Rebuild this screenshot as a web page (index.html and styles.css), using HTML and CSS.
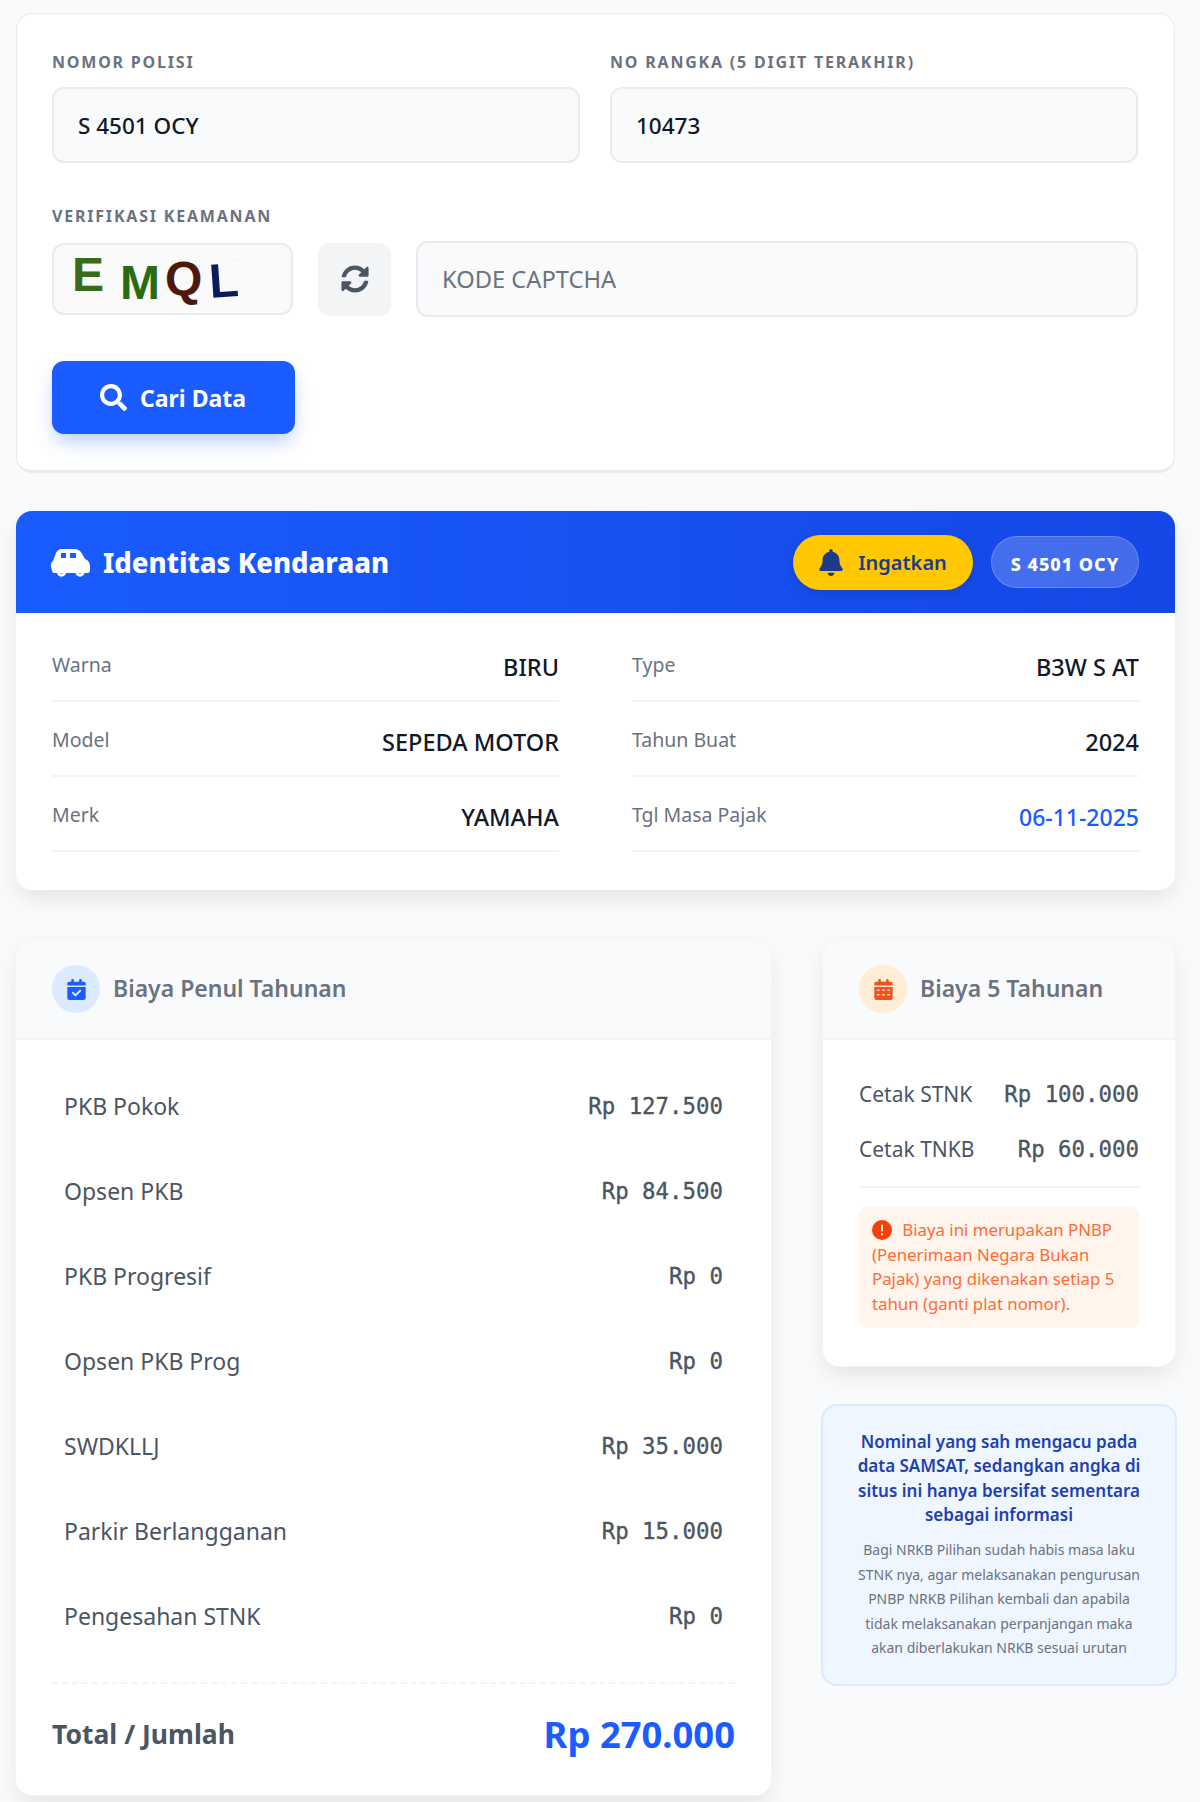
FILE: index.html
```html
<!DOCTYPE html>
<html lang="en">
<head>
    <meta charset="UTF-8">
    <meta name="viewport" content="width=device-width, initial-scale=1.0">
    <title>Cek Pajak Kendaraan</title>
    <link rel="stylesheet" href="styles.css">
</head>
<body>
    <div class="container">
        <form class="card search-card">
            <div class="form-row">
                <div class="field">
                    <label for="nopol">Nomor Polisi</label>
                    <input type="text" id="nopol" value="S 4501 OCY">
                </div>
                <div class="field">
                    <label for="rangka">No Rangka (5 Digit Terakhir)</label>
                    <input type="text" id="rangka" value="10473">
                </div>
            </div>
            <label for="captcha">Verifikasi Keamanan</label>
            <div class="captcha-row">
                <div class="captcha-img">
                    <svg class="captcha-noise" viewBox="0 0 240 72"><path d="M50 6 L150 70 M90 60 L205 8 M10 20 L60 50" /></svg>
                    <span class="ch ch-e">E</span><span class="ch ch-m">M</span><span class="ch ch-q">Q</span><span class="ch ch-l">L</span>
                </div>
                <button type="button" class="refresh-btn">
                    <svg viewBox="0 0 512 512"><path d="M370.72 133.28C339.458 104.008 298.888 87.962 255.848 88c-77.458.068-144.328 53.178-162.791 126.85-1.344 5.363-6.122 9.15-11.651 9.15H24.103c-7.498 0-13.194-6.807-11.807-14.176C33.933 94.924 134.813 8 256 8c66.448 0 126.791 26.136 171.315 68.685L463.03 40.97C478.149 25.851 504 36.559 504 57.941V192c0 13.255-10.745 24-24 24H345.941c-21.382 0-32.09-25.851-16.971-40.971l41.75-41.749zM32 296h134.059c21.382 0 32.09 25.851 16.971 40.971l-41.75 41.75c31.262 29.273 71.835 45.319 114.876 45.28 77.418-.07 144.315-53.144 162.787-126.849 1.344-5.363 6.122-9.15 11.651-9.15h57.304c7.498 0 13.194 6.807 11.807 14.176C478.067 417.076 377.187 504 256 504c-66.448 0-126.791-26.136-171.315-68.685L48.97 471.03C33.851 486.149 8 475.441 8 454.059V320c0-13.255 10.745-24 24-24z"/></svg>
                </button>
                <input type="text" id="captcha" placeholder="KODE CAPTCHA">
            </div>
            <button type="submit" class="search-btn">
                <svg viewBox="0 0 512 512"><path d="M505 442.7L405.3 343c-4.5-4.5-10.6-7-17-7H372c27.6-35.3 44-79.7 44-128C416 93.1 322.9 0 208 0S0 93.1 0 208s93.1 208 208 208c48.3 0 92.7-16.4 128-44v16.3c0 6.4 2.5 12.5 7 17l99.7 99.7c9.4 9.4 24.6 9.4 33.9 0l28.3-28.3c9.4-9.4 9.4-24.6.1-34zM208 336c-70.7 0-128-57.2-128-128 0-70.7 57.2-128 128-128 70.7 0 128 57.2 128 128 0 70.7-57.2 128-128 128z"/></svg>
                Cari Data
            </button>
        </form>

        <section class="card vehicle-card">
            <div class="vehicle-head">
                <h2>
                    <svg viewBox="0 0 39 27">
                        <path fill-rule="evenodd" d="M1 21C-1 16 0 13 2 12L5 4C6 2 8 0 11 0H23C26 0 28 1 30 3L34 10C37 11 39 14 39 17V21C39 23 38 24 36 24H3C2 24 1 23 1 21ZM10 4V9H15V4ZM19 4V9H25V4Z"/>
                        <circle cx="10.5" cy="23" r="3.2"/>
                        <circle cx="29" cy="23" r="3.2"/>
                    </svg>
                    Identitas Kendaraan
                </h2>
                <div class="head-actions">
                    <button type="button" class="remind-btn">
                        <svg viewBox="0 0 448 512"><path d="M224 0c-17.7 0-32 14.3-32 32V51.2C119 66 64 130.6 64 208v18.8c0 47-17.3 92.4-48.5 127.6l-7.4 8.3c-8.4 9.4-10.4 22.9-5.3 34.4S19.4 416 32 416H416c12.6 0 24-7.4 29.2-18.9s3.1-25-5.3-34.4l-7.4-8.3C401.3 319.2 384 273.9 384 226.8V208c0-77.4-55-142-128-156.8V32c0-17.7-14.3-32-32-32zm45.3 493.3c12-12 18.7-28.3 18.7-45.3H224 160c0 17 6.7 33.3 18.7 45.3s28.3 18.7 45.3 18.7s33.3-6.7 45.3-18.7z"/></svg>
                        Ingatkan
                    </button>
                    <span class="plate">S 4501 OCY</span>
                </div>
            </div>
            <div class="vehicle-body">
                <div class="info-row"><span>Warna</span><strong>BIRU</strong></div>
                <div class="info-row"><span>Type</span><strong>B3W S AT</strong></div>
                <div class="info-row"><span>Model</span><strong>SEPEDA MOTOR</strong></div>
                <div class="info-row"><span>Tahun Buat</span><strong>2024</strong></div>
                <div class="info-row"><span>Merk</span><strong>YAMAHA</strong></div>
                <div class="info-row"><span>Tgl Masa Pajak</span><strong class="date">06-11-2025</strong></div>
            </div>
        </section>

        <div class="cost-grid">
            <section class="card cost-card">
                <div class="cost-head">
                    <span class="head-icon blue">
                        <svg viewBox="0 0 448 512"><path d="M128 0c17.7 0 32 14.3 32 32V64H288V32c0-17.7 14.3-32 32-32s32 14.3 32 32V64h48c26.5 0 48 21.5 48 48v48H0V112C0 85.5 21.5 64 48 64H96V32c0-17.7 14.3-32 32-32zM0 192H448V464c0 26.5-21.5 48-48 48H48c-26.5 0-48-21.5-48-48V192zM329 305c9.4-9.4 9.4-24.6 0-33.9s-24.6-9.4-33.9 0l-95 95-47-47c-9.4-9.4-24.6-9.4-33.9 0s-9.4 24.6 0 33.9l64 64c9.4 9.4 24.6 9.4 33.9 0L329 305z"/></svg>
                    </span>
                    <h3>Biaya Penul Tahunan</h3>
                </div>
                <div class="cost-body">
                    <div class="cost-list">
                        <div class="cost-row"><span>PKB Pokok</span><code>Rp 127.500</code></div>
                        <div class="cost-row"><span>Opsen PKB</span><code>Rp 84.500</code></div>
                        <div class="cost-row"><span>PKB Progresif</span><code>Rp 0</code></div>
                        <div class="cost-row"><span>Opsen PKB Prog</span><code>Rp 0</code></div>
                        <div class="cost-row"><span>SWDKLLJ</span><code>Rp 35.000</code></div>
                        <div class="cost-row"><span>Parkir Berlangganan</span><code>Rp 15.000</code></div>
                        <div class="cost-row"><span>Pengesahan STNK</span><code>Rp 0</code></div>
                    </div>
                    <div class="total-row"><span>Total / Jumlah</span><strong>Rp 270.000</strong></div>
                </div>
            </section>

            <div class="side-col">
                <section class="card cost-card">
                    <div class="cost-head">
                        <span class="head-icon orange">
                            <svg viewBox="0 0 448 512"><path fill-rule="evenodd" d="M128 0c17.7 0 32 14.3 32 32V64H288V32c0-17.7 14.3-32 32-32s32 14.3 32 32V64h48c26.5 0 48 21.5 48 48v48H0V112C0 85.5 21.5 64 48 64H96V32c0-17.7 14.3-32 32-32zM0 192H448V464c0 26.5-21.5 48-48 48H48c-26.5 0-48-21.5-48-48V192zM64 256v32h64v-32zm128 0v32h64v-32zm128 0v32h64v-32zM64 368v32h64v-32zm128 0v32h64v-32zm128 0v32h64v-32z"/></svg>
                        </span>
                        <h3>Biaya 5 Tahunan</h3>
                    </div>
                    <div class="side-body">
                        <div class="side-list">
                            <div class="side-row"><span>Cetak STNK</span><code>Rp 100.000</code></div>
                            <div class="side-row"><span>Cetak TNKB</span><code>Rp 60.000</code></div>
                        </div>
                        <p class="pnbp-note">
                            <svg viewBox="0 0 512 512"><path fill-rule="evenodd" d="M256 0a256 256 0 1 1 0 512A256 256 0 1 1 256 0zM232 120v170h48V120zm0 220v48h48v-48z"/></svg>
                            Biaya ini merupakan PNBP (Penerimaan Negara Bukan Pajak) yang dikenakan setiap 5 tahun (ganti plat nomor).
                        </p>
                    </div>
                </section>

                <section class="info-box">
                    <h4>Nominal yang sah mengacu pada data SAMSAT, sedangkan angka di situs ini hanya bersifat sementara sebagai informasi</h4>
                    <p>Bagi NRKB Pilihan sudah habis masa laku STNK nya, agar melaksanakan pengurusan PNBP NRKB Pilihan kembali dan apabila tidak melaksanakan perpanjangan maka akan diberlakukan NRKB sesuai urutan</p>
                </section>
            </div>
        </div>
    </div>
</body>
</html>
```

FILE: styles.css
```css
* {
    box-sizing: border-box;
}
body {
    margin: 0;
    background-color: #f8fafc;
    font-family: "Noto Sans", sans-serif;
    color: #111827;
}
.container {
    padding: 13px 25px 7px 16px;
}
.card {
    background-color: #fff;
    border-radius: 16px;
    overflow: hidden;
    box-shadow: 0 10px 25px -3px rgba(0, 0, 0, 0.1);
}

/* search form */
.search-card {
    padding: 37px 36px 38px 35px;
    border: 1px solid #e9ebef;
    border-bottom-width: 3px;
    height: 460px;
    box-shadow: none;
}
label {
    display: block;
    font-size: 16px;
    line-height: 22px;
    font-weight: 700;
    color: #6b7280;
    letter-spacing: 1.8px;
    text-transform: uppercase;
    margin-bottom: 14px;
}
.form-row {
    display: grid;
    grid-template-columns: 1fr 1fr;
    gap: 30px;
    margin-bottom: 42px;
}
input[type="text"] {
    width: 100%;
    height: 76px;
    padding: 0 24px;
    background-color: #f9fafb;
    border: 2px solid #e9ebef;
    border-radius: 12px;
    font-family: inherit;
    font-size: 22.5px;
    font-weight: 500;
    color: #111827;
}
input::placeholder {
    color: #6b7280;
    font-size: 23.7px;
    font-weight: 400;
}
.captcha-row {
    display: flex;
    align-items: center;
    gap: 25px;
    margin-bottom: 44px;
}
.captcha-row input[type="text"] {
    flex: 1;
}
.captcha-img {
    position: relative;
    width: 241px;
    height: 72px;
    padding-left: 18px;
    background-color: #fafafa;
    border: 2px solid #e9ebef;
    border-radius: 12px;
    display: flex;
    align-items: center;
    flex-shrink: 0;
    font-family: "Liberation Sans", sans-serif;
    font-weight: 700;
}
.captcha-noise {
    position: absolute;
    inset: 0;
    width: 100%;
    height: 100%;
}
.captcha-noise path {
    stroke: #f2f2f2;
    fill: none;
}
.ch {
    position: relative;
    display: inline-block;
    font-size: 48px;
    line-height: 1;
}
.ch-e { color: #3a6a1c; transform: translateY(-4px); margin-right: 16px; }
.ch-m { color: #2a6a10; transform: translateY(4px); margin-right: 5px; }
.ch-q { color: #4e190c; transform: translateY(0); margin-right: 7px; }
.ch-l { color: #0b1a5e; transform: translateY(2px) rotate(-4deg); }
.refresh-btn {
    width: 73px;
    height: 73px;
    flex-shrink: 0;
    border: none;
    border-radius: 12px;
    background-color: #f3f4f6;
    display: flex;
    align-items: center;
    justify-content: center;
}
.refresh-btn svg {
    width: 28px;
    height: 28px;
    fill: #4b5563;
}
.search-btn {
    width: 243px;
    height: 73px;
    padding-left: 5px;
    border: none;
    border-radius: 12px;
    background-color: #1a5cff;
    color: #fff;
    font-family: inherit;
    font-size: 23px;
    font-weight: 700;
    display: flex;
    align-items: center;
    justify-content: center;
    gap: 13px;
    box-shadow: 0 10px 20px -4px rgba(26, 92, 255, 0.35);
}
.search-btn svg {
    width: 27px;
    height: 27px;
    fill: #fff;
}

/* vehicle */
.vehicle-card {
    margin-top: 38px;
    height: 379px;
}
.vehicle-head {
    height: 102px;
    padding: 0 36px;
    display: flex;
    align-items: center;
    justify-content: space-between;
    background: linear-gradient(90deg, #1a5cff, #1447e6);
}
.vehicle-head h2 {
    margin: 0;
    display: flex;
    align-items: center;
    gap: 13px;
    font-size: 27.5px;
    font-weight: 800;
    color: #fff;
}
.vehicle-head h2 svg {
    width: 39px;
    height: 27px;
    margin-left: -1px;
    fill: #fff;
    overflow: visible;
}
.vehicle-head h2 circle {
    fill: none;
    stroke: #fff;
    stroke-width: 3;
}
.head-actions {
    display: flex;
    align-items: center;
    gap: 18px;
}
.remind-btn {
    width: 180px;
    height: 55px;
    border: none;
    border-radius: 28px;
    background-color: #ffc800;
    color: #1e3a8a;
    font-family: inherit;
    font-size: 20px;
    font-weight: 600;
    display: flex;
    align-items: center;
    justify-content: center;
    gap: 15px;
    box-shadow: 0 4px 12px rgba(0, 0, 0, 0.12);
}
.remind-btn svg {
    width: 24px;
    height: 27px;
    fill: #1e3a8a;
}
.plate {
    width: 148px;
    height: 52px;
    padding-top: 3px;
    border-radius: 26px;
    border: 1px solid rgba(255, 255, 255, 0.2);
    background-color: rgba(255, 255, 255, 0.2);
    color: #fff;
    font-size: 18px;
    font-weight: 800;
    letter-spacing: 1px;
    display: flex;
    align-items: center;
    justify-content: center;
}
.vehicle-body {
    padding: 14px 36px 0;
    display: grid;
    grid-template-columns: 507px 507px;
    column-gap: 73px;
}
.info-row {
    height: 75px;
    padding-top: 26px;
    border-bottom: 2px solid #f3f4f6;
    display: flex;
    justify-content: space-between;
}
.info-row span {
    font-size: 19.5px;
    line-height: 24px;
    color: #6b7280;
}
.info-row strong {
    font-size: 23.5px;
    line-height: 28px;
    font-weight: 500;
    color: #111827;
}
.info-row .date {
    font-size: 23px;
    color: #1a5cff;
}

/* costs */
.cost-grid {
    margin-top: 50px;
    display: grid;
    grid-template-columns: 755px 352px;
    gap: 52px;
    align-items: start;
}
.cost-card {
    box-shadow: 0 0 0 1px #f3f4f6, 0 10px 25px -3px rgba(0, 0, 0, 0.1);
}
.cost-head {
    height: 100px;
    padding: 0 36px;
    display: flex;
    align-items: center;
    gap: 13px;
    background-color: #f9fafb;
    border-bottom: 2px solid #f3f4f6;
}
.cost-head h3 {
    margin: 0;
    padding-bottom: 3px;
    font-size: 23px;
    font-weight: 600;
    color: #6b7280;
}
.head-icon {
    width: 48px;
    height: 48px;
    border-radius: 50%;
    display: flex;
    align-items: center;
    justify-content: center;
}
.head-icon svg {
    width: 19px;
    height: 21px;
}
.head-icon.blue {
    background-color: #dbeafe;
}
.head-icon.blue svg {
    fill: #1a5cff;
}
.head-icon.orange {
    background-color: #ffedd5;
}
.head-icon.orange svg {
    fill: #f4511e;
}
.cost-body {
    padding: 23px 36px 12px;
}
.cost-list {
    padding: 0 12px 24px;
    border-bottom: 2px dashed #f3f4f6;
}
.cost-row {
    height: 85px;
    display: flex;
    align-items: center;
    justify-content: space-between;
}
.cost-row span {
    font-size: 23px;
    color: #4b5563;
}
code {
    font-family: "DejaVu Sans Mono", monospace;
    font-size: 22.4px;
    color: #4b5563;
    -webkit-text-stroke: 0.35px #4b5563;
}
.total-row {
    height: 99px;
    display: flex;
    align-items: center;
    justify-content: space-between;
}
.total-row span {
    font-size: 26.5px;
    font-weight: 700;
    color: #4b5563;
}
.total-row strong {
    font-size: 36.4px;
    font-weight: 700;
    color: #1a5cff;
}
.side-col {
    display: flex;
    flex-direction: column;
    gap: 38px;
}
.side-body {
    padding: 26px 36px 38px;
}
.side-list {
    padding-bottom: 10px;
    margin-bottom: 19px;
    border-bottom: 2px solid #f3f4f6;
}
.side-row {
    height: 55px;
    display: flex;
    align-items: center;
    justify-content: space-between;
}
.side-row span {
    font-size: 21px;
    color: #4b5563;
}
.pnbp-note {
    margin: 0;
    padding: 11px 13px 12px;
    background-color: #fff5ed;
    border-radius: 8px;
    font-size: 16.8px;
    line-height: 24.5px;
    color: #ff6b35;
}
.pnbp-note svg {
    width: 20px;
    height: 20px;
    margin-right: 6px;
    vertical-align: -4px;
    fill: #f4410b;
}
.info-box {
    margin: 0 -2px;
    padding: 24px 24px;
    height: 282px;
    background-color: #eff6ff;
    border: 2px solid #dbeafe;
    border-radius: 16px;
    text-align: center;
}
.info-box h4 {
    margin: 0 0 11px;
    font-size: 17px;
    line-height: 24.3px;
    font-weight: 600;
    color: #1e40af;
}
.info-box p {
    margin: 0;
    padding: 0 8px;
    font-size: 14px;
    line-height: 24.5px;
    color: #6b7280;
}
```
